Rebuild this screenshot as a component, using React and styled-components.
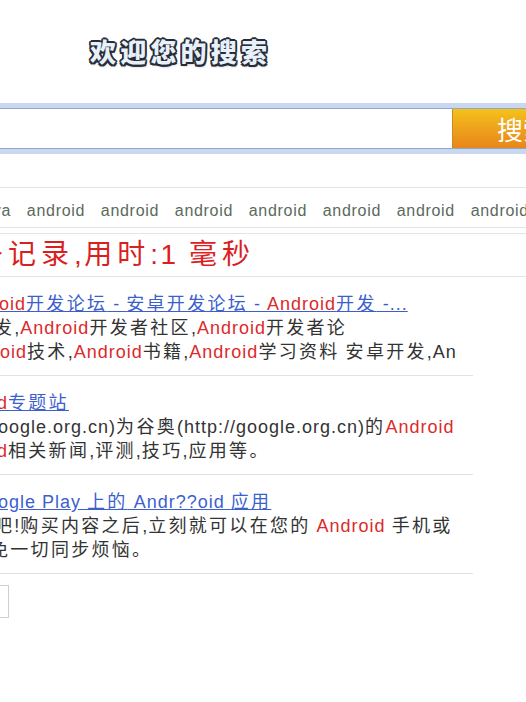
import React from "react";
import styled, { createGlobalStyle } from "styled-components";

const Global = createGlobalStyle`
  html, body { margin: 0; padding: 0; background: #ffffff; }
  body {
    font-family: "Liberation Sans", Arial, "Noto Sans CJK SC", sans-serif;
    overflow: hidden;
  }
`;

const Page = styled.div`
  width: 526px;
  height: 702px;
  overflow: hidden;
  background: #ffffff;
  display: flex;
  flex-direction: column;
`;

const TitleArea = styled.div`
  padding: 35px 0 36px 90px;
  height: 32px;
`;

const Title = styled.h1`
  margin: 0;
  font-family: "Noto Sans CJK SC", sans-serif;
  font-size: 26px;
  font-weight: 900;
  line-height: 32px;
  letter-spacing: 4.2px;
  color: #e8f0fa;
  text-shadow:
    -1.5px -1.5px 0 #262d38, 1.5px -1.5px 0 #262d38,
    -1.5px 1.5px 0 #262d38, 1.5px 1.5px 0 #262d38,
    0 -1.8px 0 #262d38, 0 1.8px 0 #262d38,
    -1.8px 0 0 #262d38, 1.8px 0 0 #262d38,
    1px 2px 3px rgba(0, 0, 0, 0.35);
`;

const SearchFrame = styled.div`
  background: #c9d8ee;
  padding: 5px 0;
`;

const SearchRow = styled.div`
  display: flex;
  height: 39px;
  border-top: 1px solid #8ea7ca;
  border-bottom: 1px solid #8ea7ca;
  overflow: hidden;
`;

const SearchInput = styled.div`
  flex: 0 0 452px;
  background: #ffffff;
`;

const SearchButton = styled.div`
  flex: 0 0 140px;
  box-sizing: border-box;
  border-left: 1px solid #c98a2c;
  background: linear-gradient(to bottom, #f4c21a 0%, #eea21c 50%, #e8861a 100%);
  color: #ffffff;
  font-family: "Noto Sans CJK SC", sans-serif;
  font-size: 26px;
  line-height: 39px;
  padding-left: 44px;
  white-space: nowrap;
`;

const TagBar = styled.div`
  margin-top: 33px;
  border-top: 1px solid #e4e4e4;
  border-bottom: 1px solid #e4e4e4;
  padding: 13px 0 6px;
  overflow: hidden;
`;

const TagRow = styled.div`
  display: flex;
  gap: 15.7px;
  margin-left: -21px;
  white-space: nowrap;
`;

const Tag = styled.span`
  font-size: 16px;
  line-height: 20px;
  letter-spacing: 0.7px;
  color: #5a6a5c;
`;

const StatBar = styled.div`
  margin-top: 5px;
  border-top: 1px solid #e4e4e4;
  border-bottom: 1px solid #e4e4e4;
  height: 42px;
  overflow: hidden;
`;

const Stat = styled.div`
  margin-left: -25px;
  font-size: 28px;
  line-height: 42px;
  letter-spacing: 2.5px;
  color: #d91f1f;
  white-space: nowrap;
`;

const Results = styled.div`
  margin-right: 53px;
  overflow: hidden;
`;

const Result = styled.div`
  padding: 15px 0 11px;
  border-bottom: 1px solid #e2e2e2;
`;

const Line = styled.div`
  margin-left: ${(p) => p.$shift || 0}px;
  font-size: 18px;
  line-height: 24px;
  letter-spacing: 1px;
  color: #333333;
  white-space: nowrap;
`;

/* CJK runs sit a little wider than the Latin runs around them */
const Wide = styled.span`
  letter-spacing: ${(p) => p.$ls}px;
`;

const TitleLink = styled.a`
  color: #3d5fce;
  text-decoration: underline;
  cursor: pointer;
`;

const Hl = styled.span`
  color: #dc2a2a;
`;

const Pager = styled.div`
  margin-top: 11px;
  display: flex;
`;

const PageButton = styled.div`
  margin-left: -33px;
  width: 40px;
  height: 31px;
  border: 1px solid #cfcfcf;
  background: #ffffff;
`;

const CJK = /([\u3000-\u303f\u4e00-\u9fff\uff00-\uffef]+)/;

function T({ children, ls = 2.3 }) {
  const parts = String(children).split(CJK);
  return parts.map((p, i) =>
    i % 2 === 1 ? (
      <Wide key={i} $ls={ls}>
        {p}
      </Wide>
    ) : (
      <React.Fragment key={i}>{p}</React.Fragment>
    )
  );
}

const tags = ["java", "android", "android", "android", "android", "android", "android", "android"];

export default function App() {
  return (
    <>
      <Global />
      <Page>
        <TitleArea>
          <Title>欢迎您的搜索</Title>
        </TitleArea>
        <SearchFrame>
          <SearchRow>
            <SearchInput />
            <SearchButton>搜索</SearchButton>
          </SearchRow>
        </SearchFrame>
        <TagBar>
          <TagRow>
            {tags.map((t, i) => (
              <Tag key={i}>{t}</Tag>
            ))}
          </TagRow>
        </TagBar>
        <StatBar>
          <Stat>
            <T ls={5}>条记录,用时:1 毫秒</T>
          </Stat>
        </StatBar>
        <Results>
          <Result>
            <Line $shift={-1}>
              <TitleLink>
                <Hl>oid</Hl>
                <T>开发论坛 - 安卓开发论坛 - </T>
                <Hl>Android</Hl>
                <T>开发 -...</T>
              </TitleLink>
            </Line>
            <Line $shift={-6}>
              <T>发,</T>
              <Hl>Android</Hl>
              <T>开发者社区,</T>
              <Hl>Android</Hl>
              <T>开发者论</T>
            </Line>
            <Line $shift={0}>
              <Hl>oid</Hl>
              <T>技术,</T>
              <Hl>Android</Hl>
              <T>书籍,</T>
              <Hl>Android</Hl>
              <T>学习资料 安卓开发,An</T>
            </Line>
          </Result>
          <Result>
            <Line $shift={-3}>
              <TitleLink>
                <Hl>d</Hl>
                <T>专题站</T>
              </TitleLink>
            </Line>
            <Line $shift={-2}>
              <T>oogle.org.cn)为谷奥(http://google.org.cn)的</T>
              <Hl>Android</Hl>
            </Line>
            <Line $shift={-3}>
              <Hl>d</Hl>
              <T>相关新闻,评测,技巧,应用等。</T>
            </Line>
          </Result>
          <Result>
            <Line $shift={-2}>
              <TitleLink>
                <T>ogle Play 上的 Andr??oid 应用</T>
              </TitleLink>
            </Line>
            <Line $shift={-6}>
              <T>吧!购买内容之后,立刻就可以在您的 </T>
              <Hl>Android</Hl>
              <T> 手机或</T>
            </Line>
            <Line $shift={-10}>
              <T>免一切同步烦恼。</T>
            </Line>
          </Result>
        </Results>
        <Pager>
          <PageButton />
        </Pager>
      </Page>
    </>
  );
}
